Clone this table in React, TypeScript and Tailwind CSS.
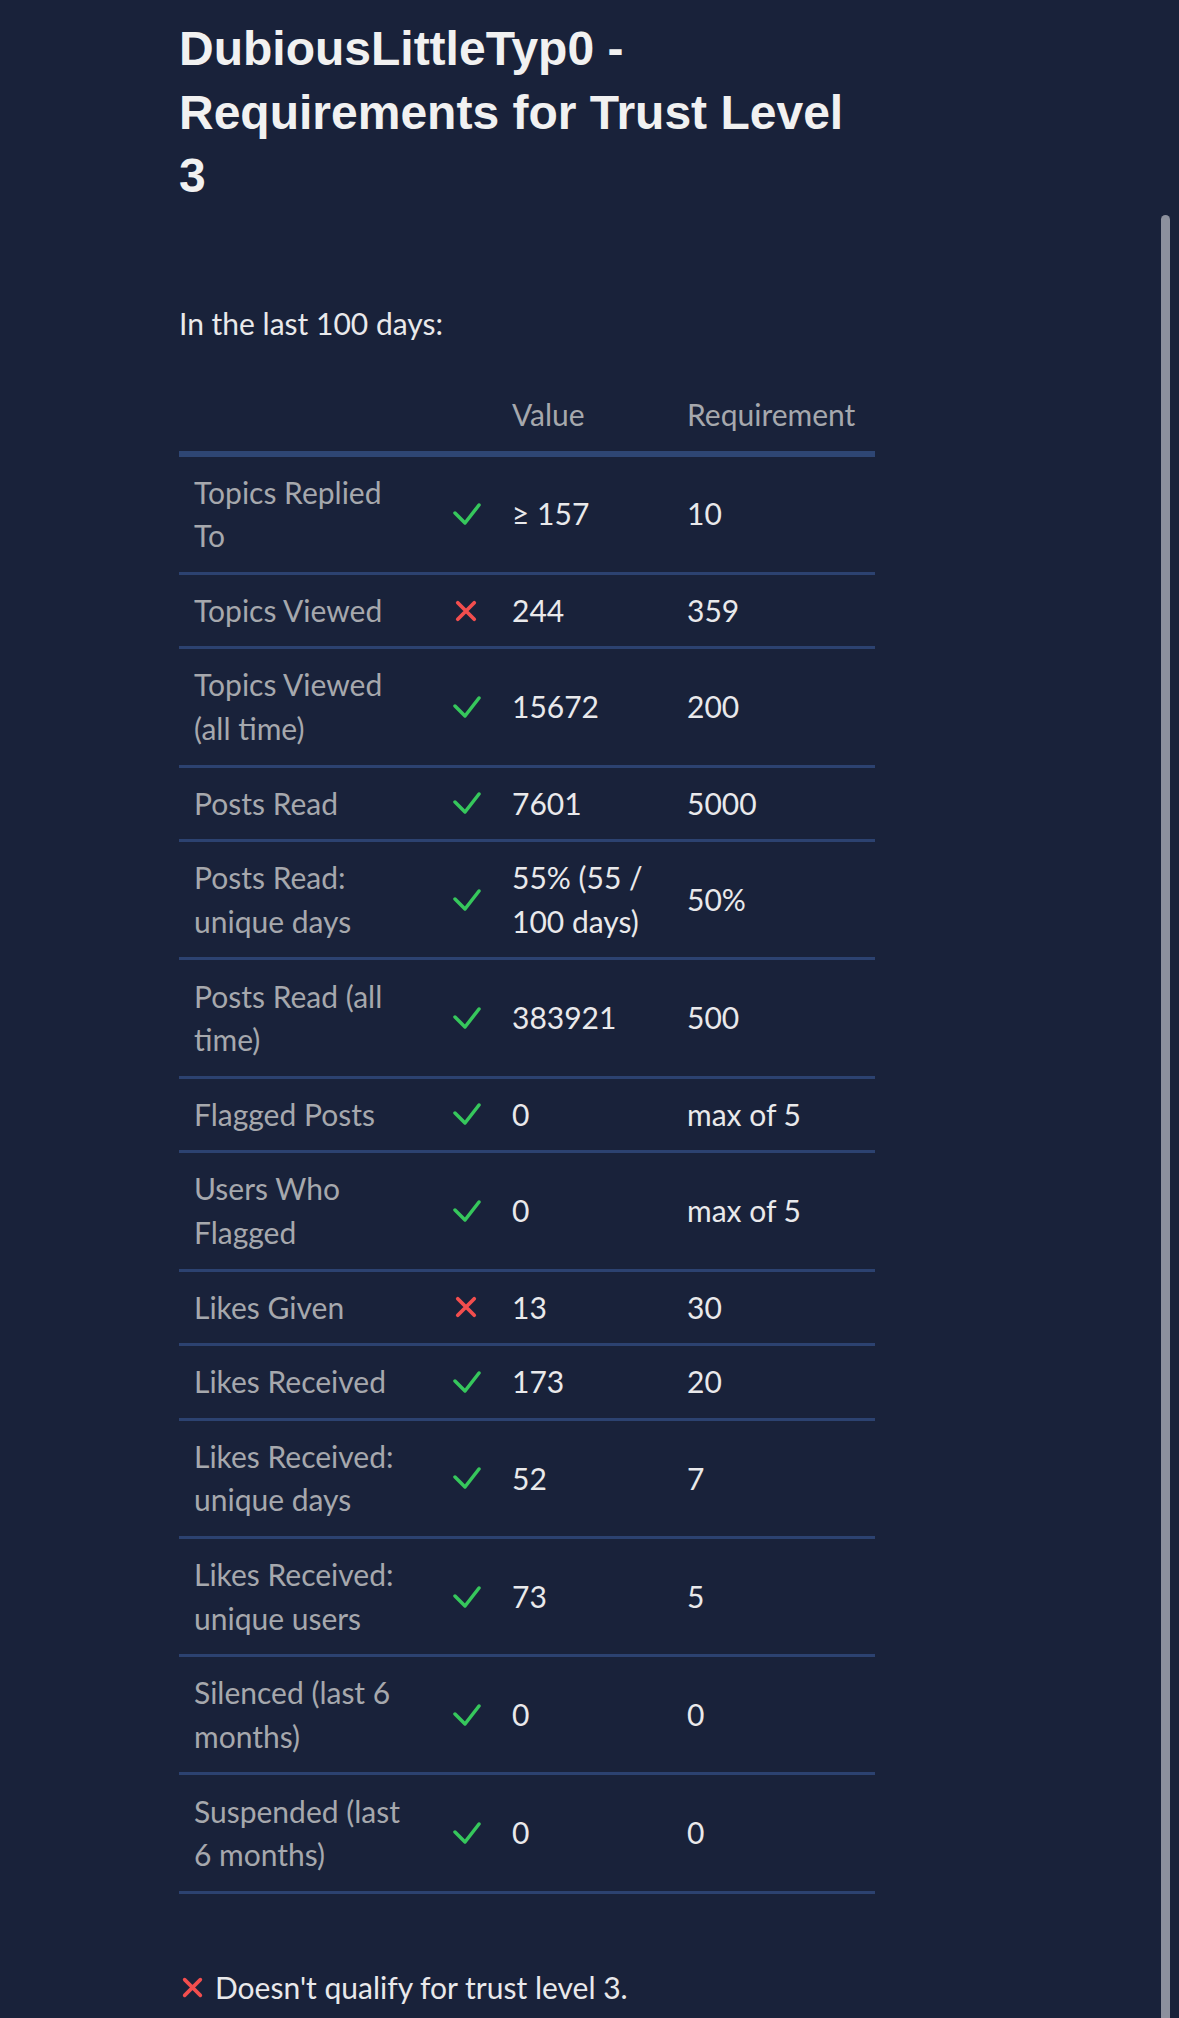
import React from 'react';

type Requirement = {
  label: string;
  met: boolean;
  value: string;
  required: string;
};

const rows: Requirement[] = [
  { label: 'Topics Replied To', met: true, value: '≥ 157', required: '10' },
  { label: 'Topics Viewed', met: false, value: '244', required: '359' },
  { label: 'Topics Viewed (all time)', met: true, value: '15672', required: '200' },
  { label: 'Posts Read', met: true, value: '7601', required: '5000' },
  { label: 'Posts Read: unique days', met: true, value: '55% (55 / 100 days)', required: '50%' },
  { label: 'Posts Read (all time)', met: true, value: '383921', required: '500' },
  { label: 'Flagged Posts', met: true, value: '0', required: 'max of 5' },
  { label: 'Users Who Flagged', met: true, value: '0', required: 'max of 5' },
  { label: 'Likes Given', met: false, value: '13', required: '30' },
  { label: 'Likes Received', met: true, value: '173', required: '20' },
  { label: 'Likes Received: unique days', met: true, value: '52', required: '7' },
  { label: 'Likes Received: unique users', met: true, value: '73', required: '5' },
  { label: 'Silenced (last 6 months)', met: true, value: '0', required: '0' },
  { label: 'Suspended (last 6 months)', met: true, value: '0', required: '0' },
];

function CheckIcon() {
  return (
    <svg width="30" height="24" viewBox="0 0 30 24" className="inline-block">
      <polyline
        points="4,11 14,21 28,3"
        fill="none"
        stroke="#36c75c"
        strokeWidth="3.5"
        strokeLinecap="round"
        strokeLinejoin="round"
      />
    </svg>
  );
}

function CrossIcon({ size = 22 }: { size?: number }) {
  return (
    <svg width={size} height={size} viewBox="0 0 20 20" className="inline-block">
      <path
        d="M2.5 2.5 L17.5 17.5 M17.5 2.5 L2.5 17.5"
        fill="none"
        stroke="#f24e4e"
        strokeWidth="3.4"
        strokeLinecap="round"
      />
    </svg>
  );
}

export default function App() {
  return (
    <div className="relative min-h-screen bg-[#19223a] font-['Lato',sans-serif] text-[30px] leading-[43.5px] text-[#e9e9eb]">
      <div className="ml-[179px] w-[696px] pt-[17px] pb-[8px]">
        <h1 className="font-['Liberation_Sans',Arial,sans-serif] text-[48px] font-bold leading-[63.5px] text-[#f1f1f1]">
          DubiousLittleTyp0 - Requirements for Trust Level 3
        </h1>

        <p className="mt-[94px]">In the last 100 days:</p>

        <table className="mt-[34px] w-full table-fixed border-collapse">
          <colgroup>
            <col className="w-[255px]" />
            <col className="w-[63px]" />
            <col className="w-[175px]" />
            <col className="w-[203px]" />
          </colgroup>
          <thead>
            <tr className="border-b-[6px] border-[#2e4674]">
              <th />
              <th />
              <th className="px-[15px] py-[14px] text-left font-normal text-[#a6a8ad]">Value</th>
              <th className="whitespace-nowrap px-[15px] py-[14px] text-left font-normal text-[#a6a8ad]">
                Requirement
              </th>
            </tr>
          </thead>
          <tbody>
            {rows.map((row) => (
              <tr key={row.label} className="border-b-[3px] border-[#2c4270]">
                <td className="px-[15px] py-[14.1px] align-middle text-[#a6a8ad]">{row.label}</td>
                <td className="py-[14.1px] text-center align-middle">
                  <div className="flex items-center justify-center">
                    {row.met ? <CheckIcon /> : <CrossIcon />}
                  </div>
                </td>
                <td className="px-[15px] py-[14.1px] align-middle">{row.value}</td>
                <td className="px-[15px] py-[14.1px] align-middle">{row.required}</td>
              </tr>
            ))}
          </tbody>
        </table>

        <p className="mt-[72px] flex items-center gap-[12px] pl-[3px]">
          <CrossIcon size={21} />
          <span>Doesn&apos;t qualify for trust level 3.</span>
        </p>
      </div>

      <div className="absolute right-[9px] top-[215px] bottom-0 w-[9px] rounded-t-full bg-[#8c909d]" />
    </div>
  );
}
